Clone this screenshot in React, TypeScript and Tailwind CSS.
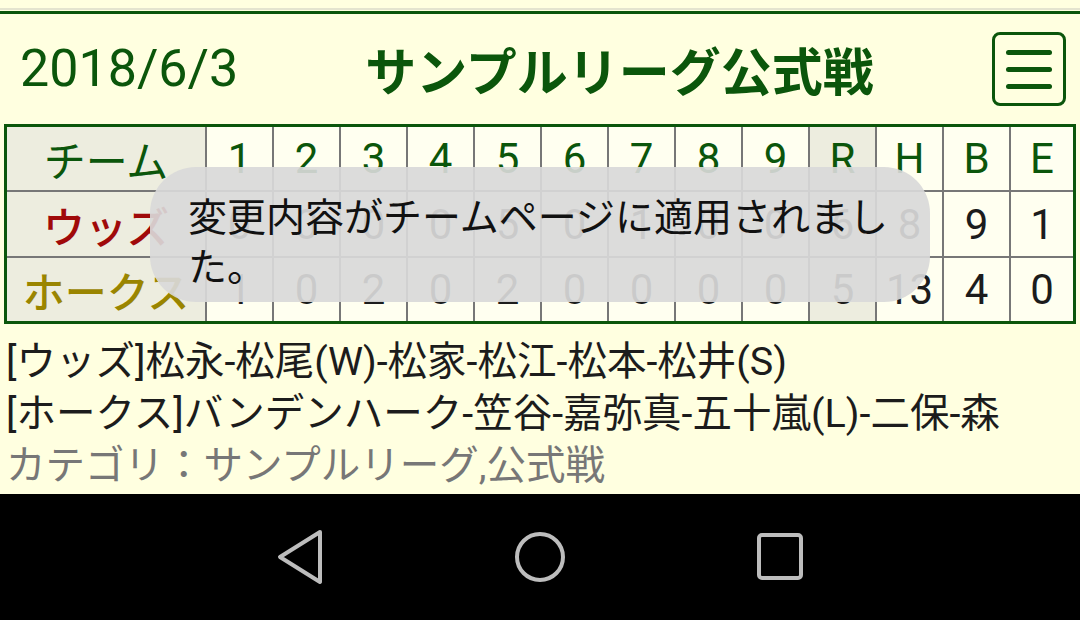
import React from 'react';

const innings = ['1', '2', '3', '4', '5', '6', '7', '8', '9', 'R', 'H', 'B', 'E'];

const teams = [
  { name: 'ウッズ', color: 'text-[#a00a0a]', scores: ['0', '0', '0', '0', '5', '0', '1', '0', '0', '6', '8', '9', '1'] },
  { name: 'ホークス', color: 'text-[#9a8500]', scores: ['1', '0', '2', '0', '2', '0', '0', '0', '0', '5', '13', '4', '0'] },
];

const cellBg = (i: number) => (i === 9 ? 'bg-[#ededdf]' : 'bg-[#fffff0]');

const App: React.FC = () => {
  return (
    <div className="relative w-[1080px] h-[620px] overflow-hidden flex flex-col bg-[#ffffe0] font-['Roboto','Noto_Sans_CJK_JP',sans-serif]">
      {/* top strip */}
      <div className="h-[8px]" />
      <div className="h-[2px] bg-[#e4e4cf]" />
      <div className="h-[1px]" />

      {/* Header */}
      <div className="h-[113px] border-t-[3px] border-[#0b560b] flex items-center pl-[20px] pr-[14px]">
        <div className="text-[52px] leading-none text-[#0b560b]">2018/6/3</div>
        <div className="ml-[127px] text-[51px] leading-none font-bold text-[#0b560b] font-['Noto_Sans_CJK_JP',sans-serif]">
          サンプルリーグ公式戦
        </div>
        <div className="ml-auto w-[74px] h-[74px] border-[3px] border-[#0b560b] rounded-[8px] flex flex-col items-center justify-center gap-[12px]">
          <div className="w-[46px] h-[5px] rounded-full bg-[#0b560b]" />
          <div className="w-[46px] h-[5px] rounded-full bg-[#0b560b]" />
          <div className="w-[46px] h-[5px] rounded-full bg-[#0b560b]" />
        </div>
      </div>

      {/* Score table */}
      <div className="mx-[4px] border-[3px] border-[#0b560b] bg-[#777777] grid grid-cols-[198px_repeat(12,65px)_1fr] grid-rows-[63px_64px_63px] gap-[2px] text-[42px]">
        <div className="bg-[#ededdf] flex items-center justify-center text-[#0b560b] font-['Noto_Sans_CJK_JP',sans-serif]">チーム</div>
        {innings.map((n, i) => (
          <div key={n} className={`${cellBg(i)} flex items-center justify-center text-[#0b560b]`}>
            {n}
          </div>
        ))}
        {teams.map(t => (
          <React.Fragment key={t.name}>
            <div className={`bg-[#ededdf] flex items-center justify-center font-medium font-['Noto_Sans_CJK_JP',sans-serif] ${t.color}`}>
              {t.name}
            </div>
            {t.scores.map((s, i) => (
              <div key={i} className={`${cellBg(i)} flex items-center justify-center text-[#1c1c1c]`}>
                {s}
              </div>
            ))}
          </React.Fragment>
        ))}
      </div>

      {/* Lineups */}
      <div className="flex-1 pt-[12px] pl-[6px] text-[39.5px] leading-[52px] text-[#1c1c1c]">
        <div>[ウッズ]松永-松尾(W)-松家-松江-松本-松井(S)</div>
        <div>[ホークス]バンデンハーク-笠谷-嘉弥真-五十嵐(L)-二保-森</div>
        <div className="text-[#777777]">カテゴリ：サンプルリーグ,公式戦</div>
      </div>

      {/* Android nav bar */}
      <div className="h-[126px] bg-black flex items-center justify-center gap-[180px]">
        <svg width="60" height="60" viewBox="0 0 60 60">
          <path d="M50 5 L10 30 L50 55 Z" fill="none" stroke="#bdbdbd" strokeWidth="4" strokeLinejoin="round" />
        </svg>
        <svg width="60" height="60" viewBox="0 0 60 60">
          <circle cx="30" cy="30" r="23" fill="none" stroke="#bdbdbd" strokeWidth="4" />
        </svg>
        <svg width="60" height="60" viewBox="0 0 60 60">
          <rect x="9" y="8" width="42" height="43" rx="3" fill="none" stroke="#bdbdbd" strokeWidth="4" />
        </svg>
      </div>

      {/* Toast */}
      <div className="absolute left-[150px] top-[167px] w-[780px] h-[135px] rounded-[46px] bg-[#d9d9d9]/92 pl-[38px] pr-[38px] pt-[22px] text-[39px] leading-[50px] text-[#111111] font-['Noto_Sans_CJK_JP',sans-serif]">
        変更内容がチームページに適用されました。
      </div>
    </div>
  );
};

export default App;
